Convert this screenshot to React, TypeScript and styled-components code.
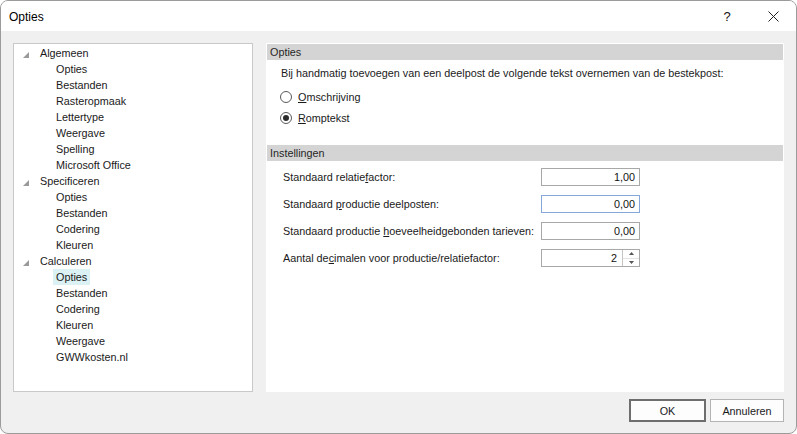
// React
import React from 'react';

// Styling
import styled, { createGlobalStyle } from 'styled-components';

const GlobalStyle = createGlobalStyle`
  html, body {
    margin: 0;
    padding: 0;
    background: #ffffff;
  }
  * {
    box-sizing: border-box;
  }
`;

const FONT = `"Liberation Sans", Arial, sans-serif`;

const Window = styled.div`
  width: 797px;
  height: 434px;
  display: flex;
  flex-direction: column;
  border: 1px solid #9b9b9b;
  border-radius: 8px;
  overflow: hidden;
  background: #f0f0f0;
  font-family: ${FONT};
  font-size: 10.8px;
  color: #000;
`;

const TitleBar = styled.div`
  height: 30px;
  flex: none;
  display: flex;
  align-items: center;
  background: #ffffff;
  padding-left: 8px;
`;

const Title = styled.div`
  flex: 1;
  font-size: 12px;
  padding-top: 1px;
`;

const TitleButton = styled.div`
  width: 46px;
  height: 30px;
  display: flex;
  align-items: center;
  justify-content: center;
  font-size: 13px;
  color: #111;
`;

const Body = styled.div`
  flex: 1;
  display: flex;
  gap: 13px;
  padding: 12px 12px 0 12px;
  height: 349px;
`;

const Tree = styled.div`
  width: 240px;
  height: 349px;
  flex: none;
  background: #ffffff;
  border: 1px solid #c9c9c9;
  padding-top: 1px;
`;

const TreeRow = styled.div<{ $child?: boolean }>`
  height: 16px;
  display: flex;
  align-items: center;
  padding-left: ${(p) => (p.$child ? '39px' : '9px')};
  color: #1a1a1a;
  white-space: nowrap;
`;

const Expander = styled.svg`
  width: 6px;
  height: 6px;
  margin: 3px 8px 0 0;
  flex: none;
`;

const TreeLabel = styled.span<{ $selected?: boolean }>`
  display: inline-block;
  height: 16px;
  line-height: 16px;
  padding: 0 3px;
  background: ${(p) => (p.$selected ? '#dbf1f4' : 'transparent')};
`;

const Panel = styled.div`
  width: 518px;
  height: 349px;
  flex: none;
  background: #ffffff;
  padding-top: 1px;
`;

const SectionHeader = styled.div<{ $gap: number }>`
  height: 16px;
  line-height: 16px;
  margin: ${(p) => p.$gap}px 1px 0 1px;
  padding-left: 3px;
  background: #d4d4d4;
  color: #262626;
`;

const Description = styled.div`
  margin-top: 5px;
  padding-left: 15px;
  line-height: 16px;
  color: #1a1a1a;
`;

const RadioList = styled.div`
  display: flex;
  flex-direction: column;
  gap: 5px;
  margin-top: 8px;
  padding-left: 14px;
`;

const RadioRow = styled.label`
  height: 16px;
  display: flex;
  align-items: center;
  gap: 6px;
  color: #1a1a1a;
`;

const RadioCircle = styled.span<{ $checked?: boolean }>`
  width: 12px;
  height: 12px;
  border-radius: 50%;
  border: 1px solid #5a5a5a;
  display: flex;
  align-items: center;
  justify-content: center;
  background: #fff;

  &::after {
    content: '';
    width: 6px;
    height: 6px;
    border-radius: 50%;
    background: ${(p) => (p.$checked ? '#2b2b2b' : 'transparent')};
  }
`;

const Settings = styled.div`
  display: grid;
  grid-template-columns: 258px 99px;
  row-gap: 9px;
  margin-top: 7px;
  padding-left: 17px;
  align-items: center;
`;

const FieldLabel = styled.div`
  color: #1a1a1a;
  line-height: 18px;
`;

const Field = styled.div<{ $focused?: boolean }>`
  height: 18px;
  display: flex;
  border: 1px solid ${(p) => (p.$focused ? '#86a7da' : '#a8a8a8')};
  background: #fff;
`;

const FieldValue = styled.div<{ $pad: number }>`
  flex: 1;
  text-align: right;
  line-height: 16px;
  padding-right: ${(p) => p.$pad}px;
  color: #111;
`;

const Spinner = styled.div`
  width: 17px;
  display: flex;
  flex-direction: column;
  border-left: 1px solid #c4c4c4;
`;

const SpinHalf = styled.div<{ $up?: boolean }>`
  flex: 1;
  display: flex;
  align-items: center;
  justify-content: center;
  border-bottom: ${(p) => (p.$up ? '1px solid #e4e4e4' : 'none')};
`;

const Footer = styled.div`
  height: 41px;
  flex: none;
  display: flex;
  justify-content: flex-end;
  gap: 4px;
  padding: 7px 12px 0 0;
`;

const Button = styled.div<{ $default?: boolean }>`
  width: ${(p) => (p.$default ? '77px' : '74px')};
  height: 23px;
  display: flex;
  align-items: center;
  justify-content: center;
  background: #fdfdfd;
  border: ${(p) => (p.$default ? '2px solid #6e6e6e' : '1px solid #b4b4b4')};
  color: #1a1a1a;
`;

const Underline = styled.span`
  text-decoration: underline;
  text-underline-offset: 1px;
`;

type Node = { label: string; child?: boolean; selected?: boolean };

const tree: Node[] = [
  { label: 'Algemeen' },
  { label: 'Opties', child: true },
  { label: 'Bestanden', child: true },
  { label: 'Rasteropmaak', child: true },
  { label: 'Lettertype', child: true },
  { label: 'Weergave', child: true },
  { label: 'Spelling', child: true },
  { label: 'Microsoft Office', child: true },
  { label: 'Specificeren' },
  { label: 'Opties', child: true },
  { label: 'Bestanden', child: true },
  { label: 'Codering', child: true },
  { label: 'Kleuren', child: true },
  { label: 'Calculeren' },
  { label: 'Opties', child: true, selected: true },
  { label: 'Bestanden', child: true },
  { label: 'Codering', child: true },
  { label: 'Kleuren', child: true },
  { label: 'Weergave', child: true },
  { label: 'GWWkosten.nl', child: true },
];

// label split into before / underlined letter / after
const fields: { pre: string; key: string; post: string; value: string; focused?: boolean; spin?: boolean }[] = [
  { pre: 'Standaard relatie', key: 'f', post: 'actor:', value: '1,00' },
  { pre: 'Standaard ', key: 'p', post: 'roductie deelposten:', value: '0,00', focused: true },
  { pre: 'Standaard productie ', key: 'h', post: 'oeveelheidgebonden tarieven:', value: '0,00' },
  { pre: 'Aantal de', key: 'c', post: 'imalen voor productie/relatiefactor:', value: '2', spin: true },
];

const App = () => {
  return (
    <>
      <GlobalStyle />
      <Window>
        <TitleBar>
          <Title>Opties</Title>
          <TitleButton>?</TitleButton>
          <TitleButton>
            <svg width="11" height="11" viewBox="0 0 11 11">
              <path d="M0.5 0.5 L10.5 10.5 M10.5 0.5 L0.5 10.5" stroke="#222" strokeWidth="1" />
            </svg>
          </TitleButton>
        </TitleBar>

        <Body>
          <Tree>
            {tree.map((n, i) => (
              <TreeRow key={i} $child={n.child}>
                {!n.child && (
                  <Expander viewBox="0 0 6 6">
                    <polygon points="6,0 6,6 0,6" fill="#9a9a9a" />
                  </Expander>
                )}
                <TreeLabel $selected={n.selected}>{n.label}</TreeLabel>
              </TreeRow>
            ))}
          </Tree>

          <Panel>
            <SectionHeader $gap={0}>Opties</SectionHeader>
            <Description>
              Bij handmatig toevoegen van een deelpost de volgende tekst overnemen van de bestekpost:
            </Description>
            <RadioList>
              <RadioRow>
                <RadioCircle />
                <span>
                  <Underline>O</Underline>mschrijving
                </span>
              </RadioRow>
              <RadioRow>
                <RadioCircle $checked />
                <span>
                  <Underline>R</Underline>omptekst
                </span>
              </RadioRow>
            </RadioList>

            <SectionHeader $gap={19}>Instellingen</SectionHeader>
            <Settings>
              {fields.map((f, i) => (
                <React.Fragment key={i}>
                  <FieldLabel>
                    {f.pre}
                    <Underline>{f.key}</Underline>
                    {f.post}
                  </FieldLabel>
                  <Field $focused={f.focused}>
                    <FieldValue $pad={f.spin ? 5 : 4}>{f.value}</FieldValue>
                    {f.spin && (
                      <Spinner>
                        <SpinHalf $up>
                          <svg width="5" height="3" viewBox="0 0 5 3">
                            <polygon points="2.5,0 5,3 0,3" fill="#555" />
                          </svg>
                        </SpinHalf>
                        <SpinHalf>
                          <svg width="5" height="3" viewBox="0 0 5 3">
                            <polygon points="0,0 5,0 2.5,3" fill="#555" />
                          </svg>
                        </SpinHalf>
                      </Spinner>
                    )}
                  </Field>
                </React.Fragment>
              ))}
            </Settings>
          </Panel>
        </Body>

        <Footer>
          <Button $default>OK</Button>
          <Button>Annuleren</Button>
        </Footer>
      </Window>
    </>
  );
};

export default App;
